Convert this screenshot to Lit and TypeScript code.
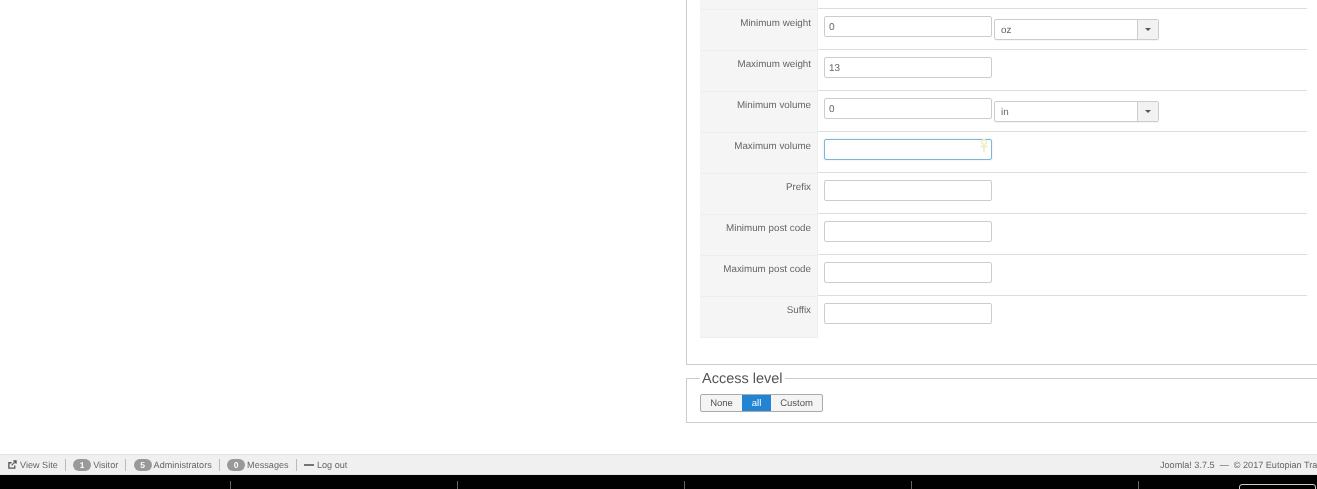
import { LitElement, html, css } from "lit";
import { customElement } from "lit/decorators.js";

type Row = { label: string; value?: string; unit?: string; focus?: boolean };
const rows: Row[] = [
  { label: "Minimum weight", value: "0", unit: "oz" },
  { label: "Maximum weight", value: "13" },
  { label: "Minimum volume", value: "0", unit: "in" },
  { label: "Maximum volume", focus: true },
  { label: "Prefix" },
  { label: "Minimum post code" },
  { label: "Maximum post code" },
  { label: "Suffix" },
];

@customElement("app-root")
export class AppRoot extends LitElement {
  static styles = css`
    :host { display: block; height: 489px; overflow: hidden; font-family: "Liberation Sans", Arial, sans-serif; color: #666; background: #fff; text-rendering: geometricPrecision; }
    .page { height: 489px; display: flex; flex-direction: column; opacity: .999; }
    .main { flex: 1; min-height: 0; display: flex; overflow: hidden; }
    .content { margin-left: 686px; width: 700px; flex: none; }
    .box1 { border: 1px solid #ccc; border-top: 0; height: 365px; box-sizing: border-box; padding-left: 13px; }
    .stubl { height: 8px; display: flex; }
    .stubl i { width: 117px; background: #f5f5f5; }
    .stubl b { width: 1px; background: #eee; }
    .table { width: 607px; }
    .row { height: 41px; display: flex; }
    .row:last-child { height: 43px; }
    .label { flex: none; box-sizing: border-box; width: 118px; border-right: 1px solid #eee; background: linear-gradient(#eee, #eee) 0 1px / 100% 1px no-repeat, #f5f5f5; text-align: right; padding: 9px 6px 0 0; font-size: 9.8px; line-height: 13px; color: #666; }
    .row:last-child .label { border-bottom: 1px solid #eee; }
    .cell { flex: 1; box-sizing: border-box; height: 41px; border-top: 1px solid #ddd; padding: 7px 0 0 6px; display: flex; align-items: flex-start; }
    .input { width: 168px; height: 21px; box-sizing: border-box; border: 1px solid #ccc; border-radius: 2px; background: #fff; font-size: 9.9px; line-height: 19px; padding: 1px 0 0 4px; position: relative; color: #666; }
    .input.focus { border-color: #7fb5d5; box-shadow: 0 0 2px rgba(82,168,236,.3); }
    .ankh { position: absolute; right: 3px; top: -1px; width: 8px; height: 13px; }
    .select { margin: 3px 0 0 2px; width: 165px; height: 21px; box-sizing: border-box; border: 1px solid #ccc; border-radius: 2px; font-size: 9.9px; line-height: 19px; display: flex; background: #fff; box-shadow: 0 1px 1px rgba(0,0,0,.05); color: #666; }
    .select span { flex: 1; padding: 1px 0 0 6px; }
    .arrow { width: 21px; box-sizing: border-box; background: #f2f2f2; border-left: 1px solid #ccc; display: flex; align-items: center; justify-content: center; }
    .arrow i { width: 0; height: 0; border: 3px solid transparent; border-top: 3px solid #555; border-bottom: 0; }
    fieldset.box2 { margin: 5px 0 0; padding: 0 0 0 13px; border: 1px solid #ccc; height: 53px; box-sizing: border-box; min-width: 0; display: block; }
    legend { font-size: 14.5px; line-height: 16px; color: #555; padding: 1px 2px 0; margin-left: 0; }
    .btns { display: inline-flex; vertical-align: top; margin-top: 7px; height: 18px; box-sizing: border-box; border: 1px solid #aaa; border-radius: 2px; font-size: 9.5px; background: #f4f4f4; overflow: hidden; }
    .btns span { display: flex; align-items: center; justify-content: center; color: #555; box-sizing: border-box; }
    .btns .a { width: 41px; }
    .btns .b { width: 29px; background: #2384d3; color: #fff; }
    .btns .c { width: 51px; }
    .status { height: 21px; flex: none; box-sizing: border-box; background: #f0f0f0; border-top: 1px solid #e4e4e4; border-bottom: 1px solid #e4e4e4; display: flex; align-items: center; font-size: 9.1px; color: #666; padding-left: 8px; white-space: nowrap; overflow: hidden; }
    .left { flex: 0 0 1152px; display: flex; align-items: center; }
    .sep { width: 1px; height: 12px; background: #bbb; margin: 0 7.2px; }
    .badge { width: 18px; height: 12px; border-radius: 6px; background: #999; color: #fff; font-weight: 700; font-size: 8.5px; line-height: 12px; text-align: center; margin-right: 2px; }
    .copy { flex: none; }
    .ico { margin-right: 3px; flex: none; }
    .black { height: 14px; flex: none; background: #000; position: relative; overflow: hidden; }
    .tick { position: absolute; top: 6px; bottom: 0; width: 1px; background: #666; }
    .tab { position: absolute; left: 1239px; width: 77px; top: 9px; height: 12px; border: 1px solid #ccc; border-radius: 3px 3px 0 0; box-sizing: border-box; }
  `;

  render() {
    return html`<div class="page">
      <div class="main"><div class="content">
        <div class="box1">
          <div class="stubl"><i></i><b></b></div>
          <div class="table">
            ${rows.map((r) => html`<div class="row">
              <div class="label">${r.label}</div>
              <div class="cell">
                <div class="input ${r.focus ? "focus" : ""}">${r.value ?? ""}${r.focus
                  ? html`<svg class="ankh" viewBox="0 0 8 13"><circle cx="4" cy="3" r="2.300" fill="none" stroke="#eef0c4" stroke-width="1.500"/><path d="M4 5.500V13M.5 7.500h7" stroke="#eef0c4" stroke-width="1.800"/></svg>`
                  : ""}</div>
                ${r.unit ? html`<div class="select"><span>${r.unit}</span><div class="arrow"><i></i></div></div>` : ""}
              </div>
            </div>`)}
          </div>
        </div>
        <fieldset class="box2">
          <legend>Access level</legend>
          <div class="btns"><span class="a">None</span><span class="b">all</span><span class="c">Custom</span></div>
        </fieldset>
      </div></div>
      <div class="status">
        <div class="left">
          <svg class="ico" width="9" height="9" viewBox="0 0 10 10"><path d="M7.500 6V9H1V3h3" fill="none" stroke="#555" stroke-width="1.500"/><path d="M4 6 8.500 1.500M5.800 1H9V4.200" fill="none" stroke="#555" stroke-width="1.300"/></svg>
          <span>View Site</span><i class="sep"></i>
          <span class="badge">1</span><span>Visitor</span><i class="sep"></i>
          <span class="badge">5</span><span>Administrators</span><i class="sep"></i>
          <span class="badge">0</span><span>Messages</span><i class="sep"></i>
          <svg class="ico" width="10" height="10" viewBox="0 0 10 10"><path d="M0 5h10" stroke="#555" stroke-width="1.600"/></svg>
          <span>Log out</span>
        </div>
        <span class="copy">Joomla! 3.7.5 &nbsp;—&nbsp; © 2017 Eutopian Trading</span>
      </div>
      <div class="black">
        ${[230, 457, 684, 911, 1138].map((x) => html`<i class="tick" style="left:${x}px"></i>`)}
        <i class="tab"></i>
      </div>
    </div>`;
  }
}
